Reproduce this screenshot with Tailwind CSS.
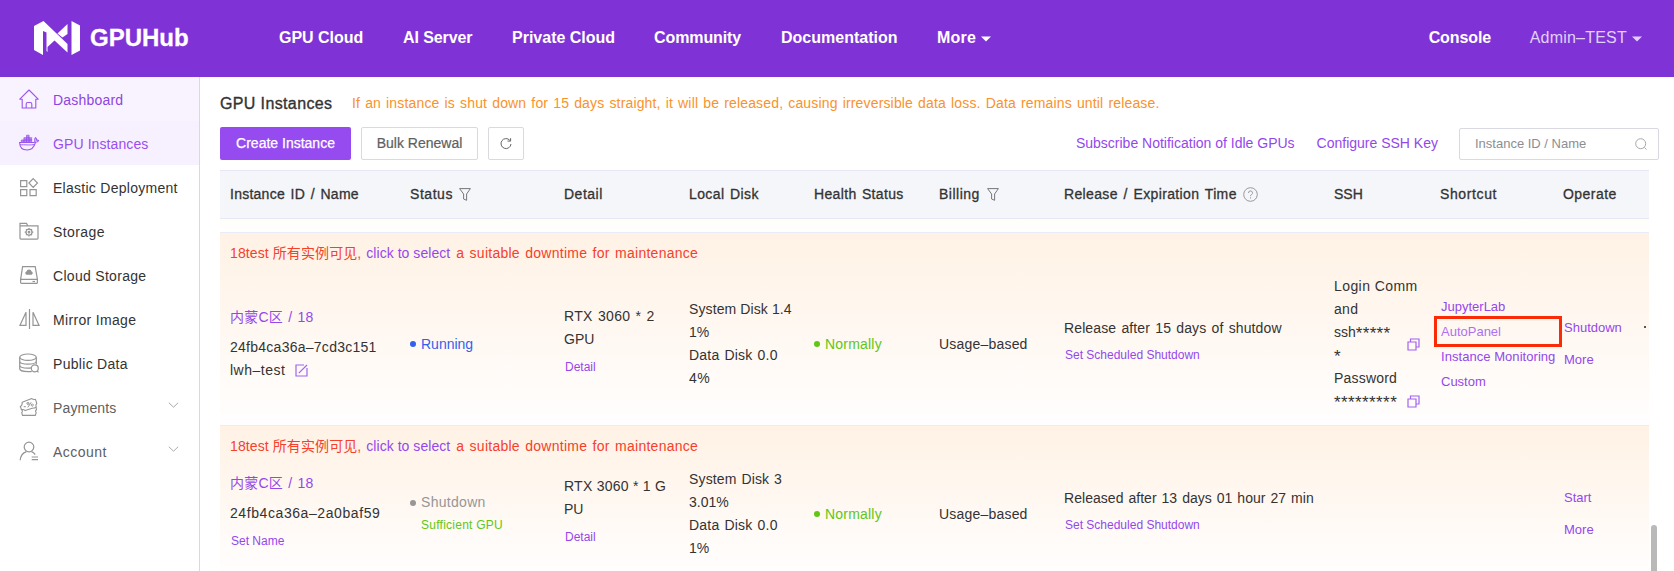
<!DOCTYPE html>
<html lang="en">
<head>
<meta charset="utf-8">
<title>GPUHub</title>
<script src="https://cdn.jsdelivr.net/npm/@tailwindcss/browser@4"></script>
</head>
<body class="h-[571px] w-[1674px] overflow-hidden bg-white font-['Liberation_Sans','Noto_Sans_CJK_SC',sans-serif] text-[14px] leading-[23px] text-[#333333]">

<header class="flex h-[77px] items-center bg-[#7f33d7] pb-[2px] text-[16px] font-bold whitespace-nowrap text-white">
  <div class="flex w-[279px] items-center pl-[34px]">
    <svg class="h-[34px] w-[46px]" viewBox="0 0 46 34" fill="#fff"><path d="M0 5 9.500 0 33.500 23V31.500L20.500 19.500 13.500 26V31L12.500 30V11.500L9 10V34L0 29Z"/><path d="M33.500 3V13L28.500 16.500 23.500 12.500Z"/><path d="M37.500 0 46 4.500V29.500L37.500 34Z"/></svg>
    <span class="ml-[10px] text-[24px] leading-[34px] [-webkit-text-stroke:0.3px_white]">GPUHub</span>
  </div>
  <nav class="flex">
    <a class="w-[124px] tracking-[-0.03px]">GPU Cloud</a>
    <a class="w-[109px] tracking-[-0.1px]">AI Server</a>
    <a class="w-[142px]">Private Cloud</a>
    <a class="w-[127px] tracking-[-0.1px]">Community</a>
    <a class="w-[156px]">Documentation</a>
    <a class="flex items-center gap-[5px] tracking-[0.2px]">More <svg class="mt-[3px] h-[6px] w-[10px]" viewBox="0 0 10 6" fill="#fff"><path d="M0 .5h10L5 5.500Z"/></svg></a>
  </nav>
  <div class="ml-auto flex pr-[32px]">
    <a class="w-[101px] tracking-[-0.1px]">Console</a>
    <a class="flex items-center gap-[5px] font-normal tracking-[0.22px] text-[#e3d0f7]">Admin–TEST <svg class="mt-[3px] h-[6px] w-[10px]" viewBox="0 0 10 6" fill="#e3d0f7"><path d="M0 .5h10L5 5.500Z"/></svg></a>
  </div>
</header>

<div class="flex h-[494px]">
  <aside class="w-[200px] shrink-0 border-r border-[#d9d9de]">
    <ul>
      <li class="flex h-[44px] items-center bg-[#f9f3ff] pl-[19px] tracking-[0.2px] text-[#8d45e0]">
        <svg class="mr-[14px] h-5 w-5" viewBox="0 0 20 20" fill="none" stroke="#9a55ec" stroke-width="1.100"><path d="M.8 10.200 10 1l9.200 9.200h-2.400V19H3.200v-8.800Z" stroke-linejoin="round"/><path d="M7.200 19v-4a1.500 1.500 0 0 1 1.500-1.500h2.600a1.500 1.500 0 0 1 1.500 1.500v4"/></svg>
        <span class="pt-[2px]">Dashboard</span>
      </li>
      <li class="flex h-[44px] items-center bg-[#f7f0fe] pl-[19px] tracking-[0.1px] text-[#994eef]">
        <svg class="mr-[14px] h-5 w-5" viewBox="0 0 20 20" fill="none" stroke="#9a55ec" stroke-width="1.100"><path d="M.6 9.500h14c1.200 0 1.600-1.200 1.200-2.500-.2-1 .2-1.800.8-2.300.8.700 1 1.700 1 2.500 1-.2 1.700 0 2 .4-.5 1.200-1.700 1.700-3.100 1.700C15.200 14 12.500 17 8 17 3.500 17 .8 14.500.6 9.500Z"/><path d="M1 11.800h3.500c3.500 0 6.500.5 11-.3" stroke-width=".9"/><path d="M2.300 7h2.600v2.300H2.300ZM4.900 7h2.600v2.300H4.900ZM7.500 7h2.600v2.300H7.500ZM10.100 7h2.600v2.300h-2.600ZM4.900 4.700h2.600V7H4.900ZM7.500 4.700h2.600V7H7.500ZM10.100 4.700h2.600V7h-2.600ZM7.500 2.200h2.600v2.500H7.500Z" fill="#b98af3" stroke-width=".7"/></svg>
        <span class="pt-[2px]">GPU Instances</span>
      </li>
      <li class="flex h-[44px] items-center pl-[19px] tracking-[0.27px]">
        <svg class="mr-[14px] h-5 w-5" viewBox="0 0 20 20" fill="none" stroke="#959595" stroke-width="1.200"><path d="M1.600 3.600h6.200v6H1.600ZM1.600 12.700h6.200v6H1.600ZM11 12.700h6.200v6H11ZM14.200 1.700 18.500 6l-4.300 4.300L9.900 6Z"/></svg>
        <span class="pt-[2px]">Elastic Deployment</span>
      </li>
      <li class="flex h-[44px] items-center pl-[19px] tracking-[0.4px]">
        <svg class="mr-[14px] h-5 w-5" viewBox="0 0 20 20" fill="none" stroke="#959595" stroke-width="1.200"><path d="M1 17.300V2.300h6.500l1.200 2.500H19v12.500a.8.8 0 0 1-.8.800H1.800A.8.800 0 0 1 1 17.300ZM1 4.800h8"/><circle cx="10" cy="11.200" r="3"/><circle cx="10" cy="11.200" r=".8"/><path d="M10 6.900v1.300M10 14.200v1.300M5.700 11.200H7M13 11.200h1.300M7 8.200l.9.900M12.100 13.300l.9.900M13 8.200l-.9.900M7.900 13.300l-.9.900"/></svg>
        <span class="pt-[2px]">Storage</span>
      </li>
      <li class="flex h-[44px] items-center pl-[19px] tracking-[0.3px]">
        <svg class="mr-[14px] h-5 w-5" viewBox="0 0 20 20" fill="none" stroke="#959595" stroke-width="1.200"><path d="M3.600 1.600h12.600l2.200 12.800v3a1 1 0 0 1-1 1H2.600a1 1 0 0 1-1-1v-3ZM1.600 15.200a1 1 0 0 1 1-.8h14.800a1 1 0 0 1 1 .8"/><path d="M13.500 16.500h2.500"/><path d="M7.400 9.700a1.700 1.700 0 0 1 0-3.200 2.700 2.700 0 0 1 5.200 0 1.700 1.700 0 0 1 0 3.200Z" fill="#959595" stroke="none"/></svg>
        <span class="pt-[2px]">Cloud Storage</span>
      </li>
      <li class="flex h-[44px] items-center pl-[19px] tracking-[0.33px]">
        <svg class="mr-[13px] h-5 w-[21px]" viewBox="0 0 21 20" fill="none" stroke="#959595" stroke-width="1.200"><path d="M10.500 0v20M7 3.200v13.200H.9ZM14 3.200v13.200h6.100Z"/></svg>
        <span class="pt-[2px]">Mirror Image</span>
      </li>
      <li class="flex h-[44px] items-center pl-[19px] tracking-[0.3px]">
        <svg class="mr-[14px] h-5 w-5" viewBox="0 0 20 20" fill="none" stroke="#959595" stroke-width="1.200"><ellipse cx="9" cy="4.200" rx="8.300" ry="3.200"/><path d="M.7 4.200v11.500c0 1.800 4 3 8.300 3 1.500 0 2.700-.1 3.800-.4M17.300 4.200v7M.7 8c0 1.900 3.700 3.200 8.300 3.200s8.300-1.300 8.300-3.200M.7 12c0 1.900 3.700 3.200 8.300 3.200 1.200 0 2.300-.1 3.300-.3"/><circle cx="15.800" cy="15.300" r="3.500" fill="#fff"/><path d="m18 17.800 1.500 1.500"/></svg>
        <span class="pt-[2px]">Public Data</span>
      </li>
      <li class="flex h-[44px] items-center pr-[20px] pl-[19px] tracking-[0.15px] text-[#606060]">
        <svg class="mr-[14px] h-5 w-5" viewBox="0 0 20 20" fill="none" stroke="#959595" stroke-width="1.100"><path d="m3.200 5.200 9.600-3.600c1 .9 2.300 1.100 3.600.6l1.400 4.300c-1 .8-1.300 1.900-.6 3.300-1 1.200-2.500 1.500-4 1.500l-7 2.300c-1-1-2.300-1.300-3.700-.9L1.300 9.500c1.500-.8 2.100-2.200 1.900-4.300Z" stroke-linejoin="round"/><path d="M2.700 12.900c.9.900 1 1.700 0 2.700l.8 2.800h12.800l.9-2.800c-1-1-.9-2 .3-2.900l-.4-2.500"/><path d="M4.700 9.700h2.200M8.800 10.400l3.400-5.200M13.200 7.100a1 1 0 1 0 .1 0M8.900 5.500a1 1 0 1 0 .1 0" stroke-width="1"/></svg>
        <span class="pt-[2px]">Payments</span>
        <svg class="mt-[-4px] ml-auto h-[6px] w-[11px]" viewBox="0 0 11 6" fill="none" stroke="#a8a8a8"><path d="m.8.700 4.700 4.500L10.200.7"/></svg>
      </li>
      <li class="flex h-[44px] items-center pr-[20px] pl-[19px] tracking-[0.45px] text-[#606060]">
        <svg class="mr-[14px] h-5 w-5" viewBox="0 0 20 20" fill="none" stroke="#959595" stroke-width="1.200"><circle cx="10" cy="6" r="4.800"/><path d="M1.200 19.300c.3-4.300 2.700-7.500 6.300-8.700M12.500 10.600c1.600.6 2.800 1.600 3.700 3M12.700 16h6.300M12.700 18.700h6.300"/></svg>
        <span class="pt-[2px]">Account</span>
        <svg class="mt-[-4px] ml-auto h-[6px] w-[11px]" viewBox="0 0 11 6" fill="none" stroke="#a8a8a8"><path d="m.8.700 4.700 4.500L10.200.7"/></svg>
      </li>
    </ul>
  </aside>

  <main class="relative flex-1 pl-[20px] whitespace-nowrap">
    <div class="flex h-[50px] items-center pt-[2px]">
      <h1 class="w-[132px] text-[16px] tracking-[0.37px] [-webkit-text-stroke:0.35px_#333333]">GPU Instances</h1>
      <p class="pt-px tracking-[0.16px] text-[#f9922b] [word-spacing:1px]">If an instance is shut down for 15 days straight, it will be released, causing irreversible data loss. Data remains until release.</p>
    </div>
    <div class="flex h-[33px] items-center">
      <button class="h-[33px] w-[131px] rounded-[2px] bg-[#964bf0] text-white [-webkit-text-stroke:0.25px_white]">Create Instance</button>
      <button class="ml-[10px] h-[33px] w-[117px] rounded-[2px] border border-[#d9d9e2] text-[#606060] [-webkit-text-stroke:0.2px_#606060]">Bulk Renewal</button>
      <button class="ml-[10px] flex h-[33px] w-[36px] items-center justify-center rounded-[2px] border border-[#d9d9e2]"><svg class="h-3 w-3" viewBox="0 0 12 12" fill="none" stroke="#666"><path d="M9.800 2.300A5 5 0 1 0 11 6M10.600.2v2.900H7.500"/></svg></button>
      <a class="ml-auto pr-[22px] text-[#9348ec]">Subscribe Notification of Idle GPUs</a>
      <a class="pr-[21px] text-[#9348ec]">Configure SSH Key</a>
      <div class="mr-[15px] flex h-[32px] w-[200px] items-center justify-between rounded-[2px] border border-[#d9d9e2] pr-[11px] pl-[15px] text-[13px] text-[#8d8d93]">Instance ID / Name<svg class="h-3 w-3" viewBox="0 0 12 12" fill="none" stroke="#a8a8a8"><circle cx="5.700" cy="5.700" r="5"/><path d="m9.300 9.300 2.200 2.200"/></svg></div>
    </div>

    <div class="mt-[10px] grid h-[49px] w-[1429px] grid-cols-[180px_154px_125px_125px_125px_125px_270px_106px_123px_96px] items-center border-y border-[#e6e8f5] bg-[#f5f6fa] [-webkit-text-stroke:0.3px_#333333] *:pl-[10px]">
      <div class="tracking-[0.25px] [word-spacing:1.5px]">Instance ID / Name</div>
      <div class="flex items-center gap-[6px] tracking-[0.55px]">Status<svg class="h-[13px] w-[12px]" viewBox="0 0 12 13" fill="none" stroke="#777"><path d="M.6.600h10.800L7.600 6v6.300L4.600 11V6Z"/></svg></div>
      <div class="tracking-[0.5px]">Detail</div>
      <div class="tracking-[0.4px] [word-spacing:1.2px]">Local Disk</div>
      <div class="tracking-[0.34px] [word-spacing:1.2px]">Health Status</div>
      <div class="flex items-center gap-[7px] tracking-[0.5px]">Billing<svg class="h-[13px] w-[12px]" viewBox="0 0 12 13" fill="none" stroke="#777"><path d="M.6.600h10.800L7.600 6v6.300L4.600 11V6Z"/></svg></div>
      <div class="flex items-center gap-[6px] tracking-[0.35px] [word-spacing:1.5px]">Release / Expiration Time<svg class="h-[15px] w-[15px]" viewBox="0 0 15 15" fill="none" stroke="#999"><circle cx="7.500" cy="7.500" r="6.800"/><path d="M5.500 6a2 2 0 1 1 3 1.600c-.7.400-1 .8-1 1.600M7.500 10.300v1.200"/></svg></div>
      <div>SSH</div>
      <div class="tracking-[0.62px]">Shortcut</div>
      <div class="tracking-[0.45px]">Operate</div>
    </div>

    <div class="h-[13px] w-[1429px] bg-gradient-to-b from-[#fffdf9] to-white"></div>

    <section class="h-[193px] w-[1429px] border-t border-[#e9ebf6] bg-gradient-to-b from-[#fff2e5] to-[#fffefe]">
      <p class="h-[40px] pt-[9px] pl-[10px] text-[#f5402c]"><span class="mr-[5px] tracking-[0.1px]">18test 所有实例可见,</span><a class="mr-[6px] tracking-[0.04px] text-[#9348ec]">click to select</a><span class="tracking-[0.26px] [word-spacing:1.2px]">a suitable downtime for maintenance</span></p>
      <div class="grid h-[142px] grid-cols-[180px_154px_125px_125px_125px_125px_270px_106px_123px_96px] items-center *:pl-[10px]">
        <div class="-mt-[7px]">
          <p class="leading-[37px] tracking-[0.25px] text-[#9348ec] [word-spacing:1px]">内蒙C区 / 18</p>
          <p class="tracking-[0.26px]">24fb4ca36a–7cd3c151</p>
          <p class="flex items-center gap-[10px] tracking-[0.5px]">lwh–test<svg class="h-[13px] w-[13px]" viewBox="0 0 13 13" fill="none" stroke="#a263f0" stroke-width="1.200"><path d="M9 1H1v11h11V4M3.800 9.200 12 1"/></svg></p>
        </div>
        <div class="flex items-center gap-[5px] text-[#3361ee]"><i class="h-[6px] w-[6px] rounded-full bg-[#3361ee]"></i>Running</div>
        <div>
          <p class="tracking-[0.35px] [word-spacing:0.9px]">RTX 3060 * 2</p><p>GPU</p>
          <p class="text-[12px] leading-[33px]"><a class="pl-px text-[#9348ec]">Detail</a></p>
        </div>
        <div>
          <p class="tracking-[0.1px]">System Disk 1.4</p><p>1%</p><p class="tracking-[0.2px] [word-spacing:1px]">Data Disk 0.0</p><p class="tracking-[0.4px]">4%</p>
        </div>
        <div class="flex items-center gap-[5px] tracking-[0.2px] text-[#61c614]"><i class="h-[6px] w-[6px] rounded-full bg-[#61c614]"></i>Normally</div>
        <div class="tracking-[0.2px]">Usage–based</div>
        <div>
          <p class="tracking-[0.12px] [word-spacing:1.2px]">Release after 15 days of shutdow</p>
          <p class="pl-px text-[12px] leading-[31px] text-[#9348ec]">Set Scheduled Shutdown</p>
        </div>
        <div>
          <p class="tracking-[0.42px]">Login Comm</p><p class="tracking-[0.3px]">and</p>
          <div class="flex items-center justify-between pr-[10px]"><p>ssh<span class="text-[17px] leading-[0] tracking-[0.3px] align-[-2px]">*****</span><br><span class="text-[17px] leading-[0] align-[-2px]">*</span></p><svg class="h-[13px] w-[13px]" viewBox="0 0 13 13" fill="none" stroke="#a263f0" stroke-width="1.200"><path d="M1 4h8v8H1ZM3.500 4V1H12v8H9"/></svg></div>
          <p class="tracking-[0.2px]">Password</p>
          <div class="flex items-center justify-between pr-[10px]"><p><span class="text-[17px] leading-[0] tracking-[0.4px] align-[-2px]">*********</span></p><svg class="h-[13px] w-[13px]" viewBox="0 0 13 13" fill="none" stroke="#a263f0" stroke-width="1.200"><path d="M1 4h8v8H1ZM3.500 4V1H12v8H9"/></svg></div>
        </div>
        <div class="text-[13px] leading-[25px] text-[#9348ec]">
          <p class="pl-px">JupyterLab</p>
          <div class="pl-px text-[#ae70f2]">AutoPanel</div>
          <p class="pl-px tracking-[0.05px]">Instance Monitoring</p>
          <p class="pl-px">Custom</p>
        </div>
        <div class="flex text-[13px] leading-[32px] text-[#9348ec]">
          <div class="w-[81px] pl-px"><p>Shutdown</p><p>More</p></div>
          <i class="mt-[14px] h-[2px] w-[2px] bg-[#555555]"></i>
        </div>
      </div>
    </section>

    <section class="h-[150px] w-[1429px] border-t border-[#e9ebf6] bg-gradient-to-b from-[#fff2e5] to-[#fffefe]">
      <p class="h-[40px] pt-[9px] pl-[10px] text-[#f5402c]"><span class="mr-[5px] tracking-[0.1px]">18test 所有实例可见,</span><a class="mr-[6px] tracking-[0.04px] text-[#9348ec]">click to select</a><span class="tracking-[0.26px] [word-spacing:1.2px]">a suitable downtime for maintenance</span></p>
      <div class="grid h-[96px] grid-cols-[180px_154px_125px_125px_125px_125px_270px_106px_123px_96px] items-center *:pl-[10px]">
        <div class="-mt-[6px]">
          <p class="leading-[37px] tracking-[0.25px] text-[#9348ec] [word-spacing:1px]">内蒙C区 / 18</p>
          <p class="tracking-[0.58px]">24fb4ca36a–2a0baf59</p>
          <p class="pl-px text-[12px] leading-[33px] text-[#9348ec]">Set Name</p>
        </div>
        <div>
          <p class="flex items-center gap-[5px] tracking-[0.3px] text-[#969696]"><i class="h-[6px] w-[6px] rounded-full bg-[#969696]"></i>Shutdown</p>
          <p class="pl-[11px] text-[12px] tracking-[0.25px] text-[#61c614]">Sufficient GPU</p>
        </div>
        <div>
          <p class="tracking-[0.25px]">RTX 3060 * 1 G</p><p>PU</p>
          <p class="text-[12px] leading-[33px]"><a class="pl-px text-[#9348ec]">Detail</a></p>
        </div>
        <div>
          <p class="tracking-[0.15px] [word-spacing:0.8px]">System Disk 3</p><p>3.01%</p><p class="tracking-[0.2px] [word-spacing:1px]">Data Disk 0.0</p><p>1%</p>
        </div>
        <div class="flex items-center gap-[5px] tracking-[0.2px] text-[#61c614]"><i class="h-[6px] w-[6px] rounded-full bg-[#61c614]"></i>Normally</div>
        <div class="tracking-[0.2px]">Usage–based</div>
        <div>
          <p class="tracking-[0.04px] [word-spacing:1px]">Released after 13 days 01 hour 27 min</p>
          <p class="pl-px text-[12px] leading-[31px] text-[#9348ec]">Set Scheduled Shutdown</p>
        </div>
        <div></div>
        <div></div>
        <div class="text-[13px] leading-[32px] text-[#9348ec]">
          <p class="pl-px">Start</p><p class="pl-px">More</p>
        </div>
      </div>
    </section>

    <!-- highlight around the AutoPanel shortcut -->
    <div class="absolute top-[239px] left-[1234px] h-[31px] w-[128px] border-3 border-[#f92c07]"></div>
    <!-- scrollbar thumb -->
    <div class="absolute top-[448px] left-[1451px] h-[60px] w-[6px] rounded-full bg-[#b9b9b9]"></div>
  </main>
</div>
</body>
</html>
